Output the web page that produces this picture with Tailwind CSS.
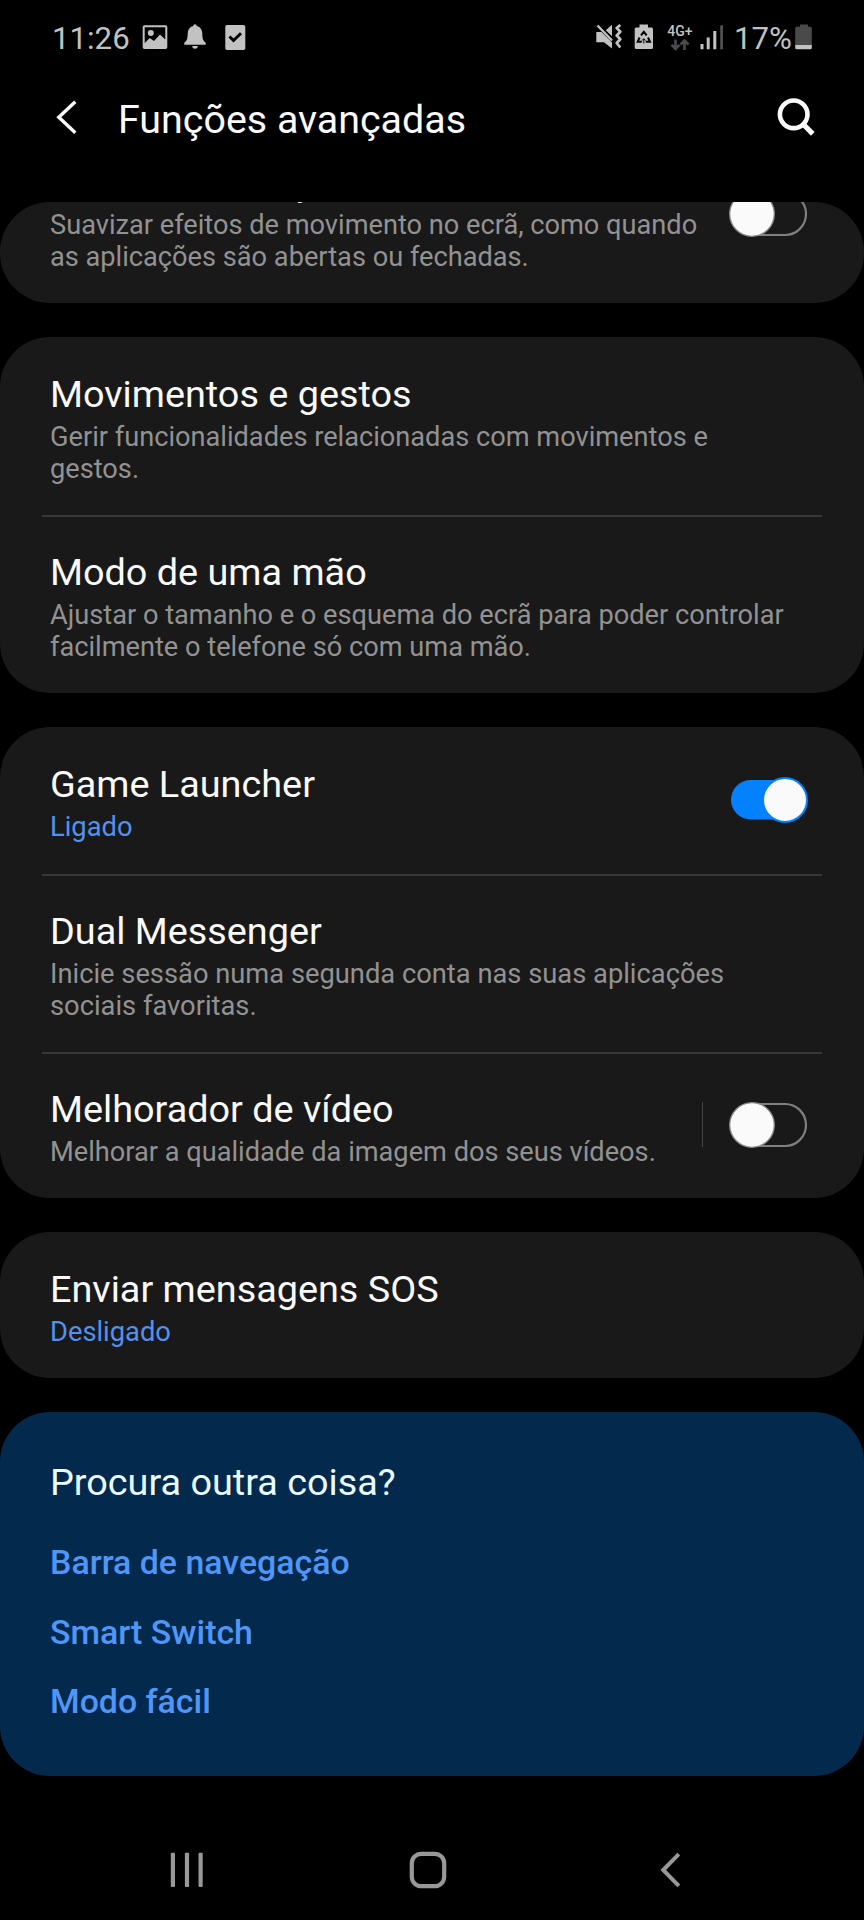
<!DOCTYPE html>
<html lang="pt">
<head>
<meta charset="utf-8">
<title>Funções avançadas</title>
<script src="https://cdn.jsdelivr.net/npm/@tailwindcss/browser@4"></script>
</head>
<body class="bg-black">
<div class="w-[864px] h-[1920px] bg-black text-[#fafafa] font-[Roboto,sans-serif] flex flex-col overflow-hidden">

  <!-- Status bar -->
  <div class="h-[77px] shrink-0 flex items-center justify-between pl-[52px] pr-[51px] text-[#c2c2c2]">
    <div class="flex items-center">
      <span class="text-[31.2px] leading-10 w-[90px]">11:26</span>
      <svg class="-mt-[3px]" width="26" height="26" viewBox="0 0 26 26" fill="currentColor"><path fill-rule="evenodd" d="M2.5 1.3h21a1.8 1.8 0 0 1 1.8 1.8v20.2a1.8 1.8 0 0 1-1.8 1.8h-21a1.8 1.8 0 0 1-1.8-1.8V3.1a1.8 1.8 0 0 1 1.8-1.8zM2.7 3.3v15.7l5-5 4.3 3 6-6.5 5.3 5V3.3z"/><circle cx="8.8" cy="9" r="3"/></svg>
      <svg class="-mt-[3px] ml-[16px]" width="22" height="26" viewBox="0 0 22 26" fill="currentColor"><path d="M11 0.3a1.8 1.8 0 0 1 1.8 1.7C16.5 3 18.300 5.8 18.3 9.5c0 5.5 1 7.500 3.4 9.3v2H0.3v-2C2.7 17 3.7 15 3.7 9.5 3.7 5.8 5.5 3 9.2 2A1.8 1.8 0 0 1 11 .3zM8.3 22h5.4a2.7 2.7 0 0 1-5.4 0z"/></svg>
      <svg class="-mt-[3px] ml-[19px]" width="21" height="26" viewBox="0 0 21 26" fill="none"><rect x="0.3" y="1" width="20" height="25" rx="1.8" fill="currentColor"/><path d="M4.5 12.500l4 4 7.5-7.3" stroke="#000" stroke-width="3"/></svg>
    </div>
    <div class="flex items-center">
      <svg class="-mt-[3px]" width="26" height="26" viewBox="0 0 26 26" fill="none"><path d="M0.300 8H5.500L16 18.600V24.500L8 18.300H0.300zM9.800 6.200L16 0.800V12.200z" fill="currentColor"/><path d="M1.500 1.500L16 16.500" stroke="currentColor" stroke-width="2.400"/><path d="M24.300 1l-3.600 3 3.600 3.700-3.600 3.800 3.600 3.800-3.600 3.700 3.600 4.500" stroke="currentColor" stroke-width="2.700" stroke-linejoin="round"/></svg>
      <svg class="-mt-[3px] ml-[12px]" width="20" height="26" viewBox="0 0 20 26" fill="none"><path d="M5.500 0.500h8.500v3h3.400a1.600 1.600 0 0 1 1.600 1.600v18.300a1.600 1.600 0 0 1-1.600 1.600H2.300A1.600 1.600 0 0 1 .7 23.400V5.100a1.600 1.600 0 0 1 1.600-1.600h3.200z" fill="currentColor"/><path d="M7 11.300L9.800 7.800l2.900 3.500M14 13.500l2 4.200h-4.200M7.800 17.700H3.700l1.900-4.200" stroke="#000" stroke-width="2"/><path d="M9.800 19.500v-4.500M8 16.500l1.800-1.800 1.800 1.800" stroke="#000" stroke-width="1"/></svg>
      <div class="flex flex-col items-center ml-[12px] w-[28px] -mt-[3px]">
        <span class="text-[14px] leading-[16px] font-medium">4G+</span>
        <svg width="20" height="12" viewBox="0 0 20 12" fill="none" stroke="#4c4c4c" stroke-width="2.600"><path d="M5.500 0.500v9M1.500 5.800l4 4 4-4M14.500 11V2M10.500 5.500l4-4 4 4"/></svg>
      </div>
      <svg class="-mt-[3px] ml-[6px]" width="24" height="26" viewBox="0 0 24 26" fill="currentColor"><path d="M0.500 20h3v5.300h-3zM6.700 13.500h3v11.800h-3zM13.300 7h3v18.300h-3z"/><path d="M20.200 1.300h2.800v24h-2.800z" fill="#505050"/></svg>
      <span class="text-[31.2px] leading-10 w-[63px] pl-[2px] ml-[8px]">17%</span>
      <svg class="-mt-[3px]" width="18" height="26" viewBox="0 0 18 26"><path d="M5 0.500h8v2.300h2.300a1.500 1.500 0 0 1 1.500 1.500V21H0.200V4.300a1.500 1.500 0 0 1 1.500-1.500H5z" fill="#4a4a4a"/><path d="M0.200 21h16.600v2.800a1.500 1.500 0 0 1-1.500 1.500H1.700a1.500 1.500 0 0 1-1.500-1.500z" fill="#c2c2c2"/></svg>
    </div>
  </div>

  <!-- App bar -->
  <header class="h-[84px] shrink-0 flex items-center pl-[55px] pr-[48px]">
    <svg class="-mt-[4px]" width="24" height="36" viewBox="0 0 24 36" fill="none" stroke="#fafafa" stroke-width="3.400"><path d="M20.300 2.800L3.800 18.300l16.500 15.500"/></svg>
    <h1 class="ml-[39px] mt-[2px] text-[39.4px] leading-[48px] grow">Funções avançadas</h1>
    <svg class="-mt-[4px]" width="40" height="40" viewBox="0 0 40 40" fill="none" stroke="#fafafa"><circle cx="17.700" cy="17.300" r="13.800" stroke-width="4.600"/><path d="M27.500 27.500l9.300 9.300" stroke-width="5.200"/></svg>
  </header>

  <main class="mt-[41px] h-[1574px] shrink-0 flex flex-col gap-[34px]">

    <!-- Partly scrolled card -->
    <section class="h-[101px] bg-[#191919] rounded-[50px] overflow-hidden">
      <div class="-mt-[45px] flex pl-[50px] pr-[55px]">
        <div class="grow">
          <h2 class="text-[37.8px] leading-[51px]">Reduzir animações</h2>
          <p class="mt-px text-[27.2px] leading-[32px] text-[#929292]">Suavizar efeitos de movimento no ecrã, como quando<br>as aplicações são abertas ou fechadas.</p>
        </div>
        <svg class="mt-[33px] shrink-0" width="80" height="48" viewBox="0 0 80 48" fill="none"><rect x="5" y="3" width="72" height="42" rx="21" stroke="#808080" stroke-width="2.200"/><circle cx="23" cy="24" r="22.300" fill="#fafafa" stroke="#8a8a8a" stroke-width="1.300"/></svg>
      </div>
    </section>

    <section class="h-[356px] bg-[#191919] rounded-[50px]">
      <div class="h-[178px] pt-[32px] pl-[50px]">
        <h2 class="text-[37.8px] leading-[51px]">Movimentos e gestos</h2>
        <p class="mt-px text-[27.2px] leading-[32px] text-[#929292]">Gerir funcionalidades relacionadas com movimentos e<br>gestos.</p>
      </div>
      <div class="mx-[42px] h-[2px] bg-[#383838]"></div>
      <div class="h-[176px] pt-[30px] pl-[50px]">
        <h2 class="text-[37.8px] leading-[51px]">Modo de uma mão</h2>
        <p class="mt-px text-[27.2px] leading-[32px] text-[#929292]">Ajustar o tamanho e o esquema do ecrã para poder controlar<br>facilmente o telefone só com uma mão.</p>
      </div>
    </section>

    <section class="h-[471px] bg-[#191919] rounded-[50px]">
      <div class="h-[147px] flex items-center pl-[50px] pr-[55px]">
        <div class="grow">
          <h2 class="text-[37.8px] leading-[51px]">Game Launcher</h2>
          <p class="mt-px text-[27.3px] leading-[32px] text-[#5491ee]">Ligado</p>
        </div>
        <svg class="-mt-[2px]" width="80" height="48" viewBox="0 0 80 48"><rect x="2" y="4" width="74" height="39.500" rx="19.700" fill="#0381fe"/><circle cx="56" cy="24" r="22" fill="#fafafa" stroke="#0381fe" stroke-width="2"/></svg>
      </div>
      <div class="mx-[42px] h-[2px] bg-[#383838]"></div>
      <div class="h-[176px] pt-[30px] pl-[50px]">
        <h2 class="text-[37.8px] leading-[51px]">Dual Messenger</h2>
        <p class="mt-px text-[27.3px] leading-[32px] text-[#929292]">Inicie sessão numa segunda conta nas suas aplicações<br>sociais favoritas.</p>
      </div>
      <div class="mx-[42px] h-[2px] bg-[#383838]"></div>
      <div class="h-[144px] flex items-start pt-[30px] pl-[50px] pr-[55px]">
        <div class="grow">
          <h2 class="text-[37.8px] leading-[51px]">Melhorador de vídeo</h2>
          <p class="mt-px text-[27.2px] leading-[32px] text-[#929292]">Melhorar a qualidade da imagem dos seus vídeos.</p>
        </div>
        <div class="w-px h-[45px] bg-[#444] mr-[26px] mt-[18px]"></div>
        <svg class="mt-[17px]" width="80" height="48" viewBox="0 0 80 48" fill="none"><rect x="5" y="3" width="72" height="42" rx="21" stroke="#808080" stroke-width="2.200"/><circle cx="23" cy="24" r="22.300" fill="#fafafa" stroke="#8a8a8a" stroke-width="1.300"/></svg>
      </div>
    </section>

    <section class="h-[146px] bg-[#191919] rounded-[50px] pt-[32px] pl-[50px]">
      <h2 class="text-[37.8px] leading-[51px]">Enviar mensagens SOS</h2>
      <p class="mt-px text-[27.3px] leading-[32px] text-[#5491ee]">Desligado</p>
    </section>

    <section class="h-[364px] bg-[#03294d] rounded-[50px] pt-[45px] pl-[50px]">
      <h2 class="text-[37.8px] leading-[51px] text-[#eafaff]">Procura outra coisa?</h2>
      <ul class="mt-[20px] text-[33.900px] leading-[69.500px] font-medium text-[#5096f8]">
        <li>Barra de navegação</li>
        <li>Smart Switch</li>
        <li>Modo fácil</li>
      </ul>
    </section>
  </main>

  <!-- Navigation bar -->
  <nav class="mt-[44px] h-[100px] shrink-0 flex items-center justify-between pl-[170px] pr-[182px]">
    <svg width="34" height="36" viewBox="0 0 34 36" fill="#989898"><rect x="0.800" y="0.800" width="4.200" height="34.200" rx="1"/><rect x="14.900" y="0.800" width="4.200" height="34.200" rx="1"/><rect x="28.500" y="0.800" width="4.200" height="34.200" rx="1"/></svg>
    <svg class="ml-[-8px]" width="38" height="38" viewBox="0 0 38 38" fill="none"><rect x="2.800" y="2.800" width="32.400" height="32.400" rx="9.500" stroke="#989898" stroke-width="4.200"/></svg>
    <svg width="22" height="36" viewBox="0 0 22 36" fill="none" stroke="#989898" stroke-width="4"><path d="M18.800 2.200L3.200 18l15.600 15.800"/></svg>
  </nav>
</div>
</body>
</html>
